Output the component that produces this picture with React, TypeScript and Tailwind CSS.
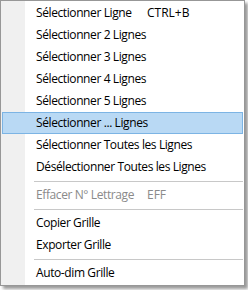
import React from "react";

type Item =
  | { type: "item"; label: string; shortcut?: string; disabled?: boolean; active?: boolean }
  | { type: "sep" };

const items: Item[] = [
  { type: "item", label: "Sélectionner Ligne", shortcut: "CTRL+B" },
  { type: "item", label: "Sélectionner 2 Lignes" },
  { type: "item", label: "Sélectionner 3 Lignes" },
  { type: "item", label: "Sélectionner 4 Lignes" },
  { type: "item", label: "Sélectionner 5 Lignes" },
  { type: "item", label: "Sélectionner ... Lignes", active: true },
  { type: "item", label: "Sélectionner Toutes les Lignes" },
  { type: "item", label: "Désélectionner Toutes les Lignes" },
  { type: "sep" },
  { type: "item", label: "Effacer N° Lettrage", shortcut: "EFF", disabled: true },
  { type: "sep" },
  { type: "item", label: "Copier Grille" },
  { type: "item", label: "Exporter Grille" },
  { type: "sep" },
  { type: "item", label: "Auto-dim Grille" },
];

export default function App() {
  return (
    <div
      className="w-[248px] h-[290px] bg-white overflow-hidden"
      style={{ fontFamily: '"Open Sans", "Noto Sans", sans-serif' }}
    >
      <div className="w-[245px] h-[286px] border border-[#979797] bg-[linear-gradient(to_right,#f0f0f0_24px,#ffffff_24px)] shadow-[3px_3px_3px_rgba(0,0,0,0.4)] py-px px-px flex flex-col">
        {items.map((it, i) =>
          it.type === "sep" ? (
            <div key={i} className="h-[6px] flex items-center pl-[32px]">
              <div className="h-px w-full bg-[#c8c8c8]" />
            </div>
          ) : (
            <div
              key={i}
              className={
                "h-[22px] flex items-center text-[12px] leading-none tracking-[-0.4px] " +
                (it.active
                  ? "bg-[#b9d9f4] border border-[#7cb4e4] pl-[33px] "
                  : "border border-transparent pl-[33px] ") +
                (it.disabled ? "text-[#8a8a8a]" : "text-black")
              }
            >
              <span className="w-[111px] shrink-0 whitespace-nowrap">{it.label}</span>
              {it.shortcut && <span className="whitespace-nowrap tracking-[0px]">{it.shortcut}</span>}
            </div>
          )
        )}
      </div>
    </div>
  );
}
